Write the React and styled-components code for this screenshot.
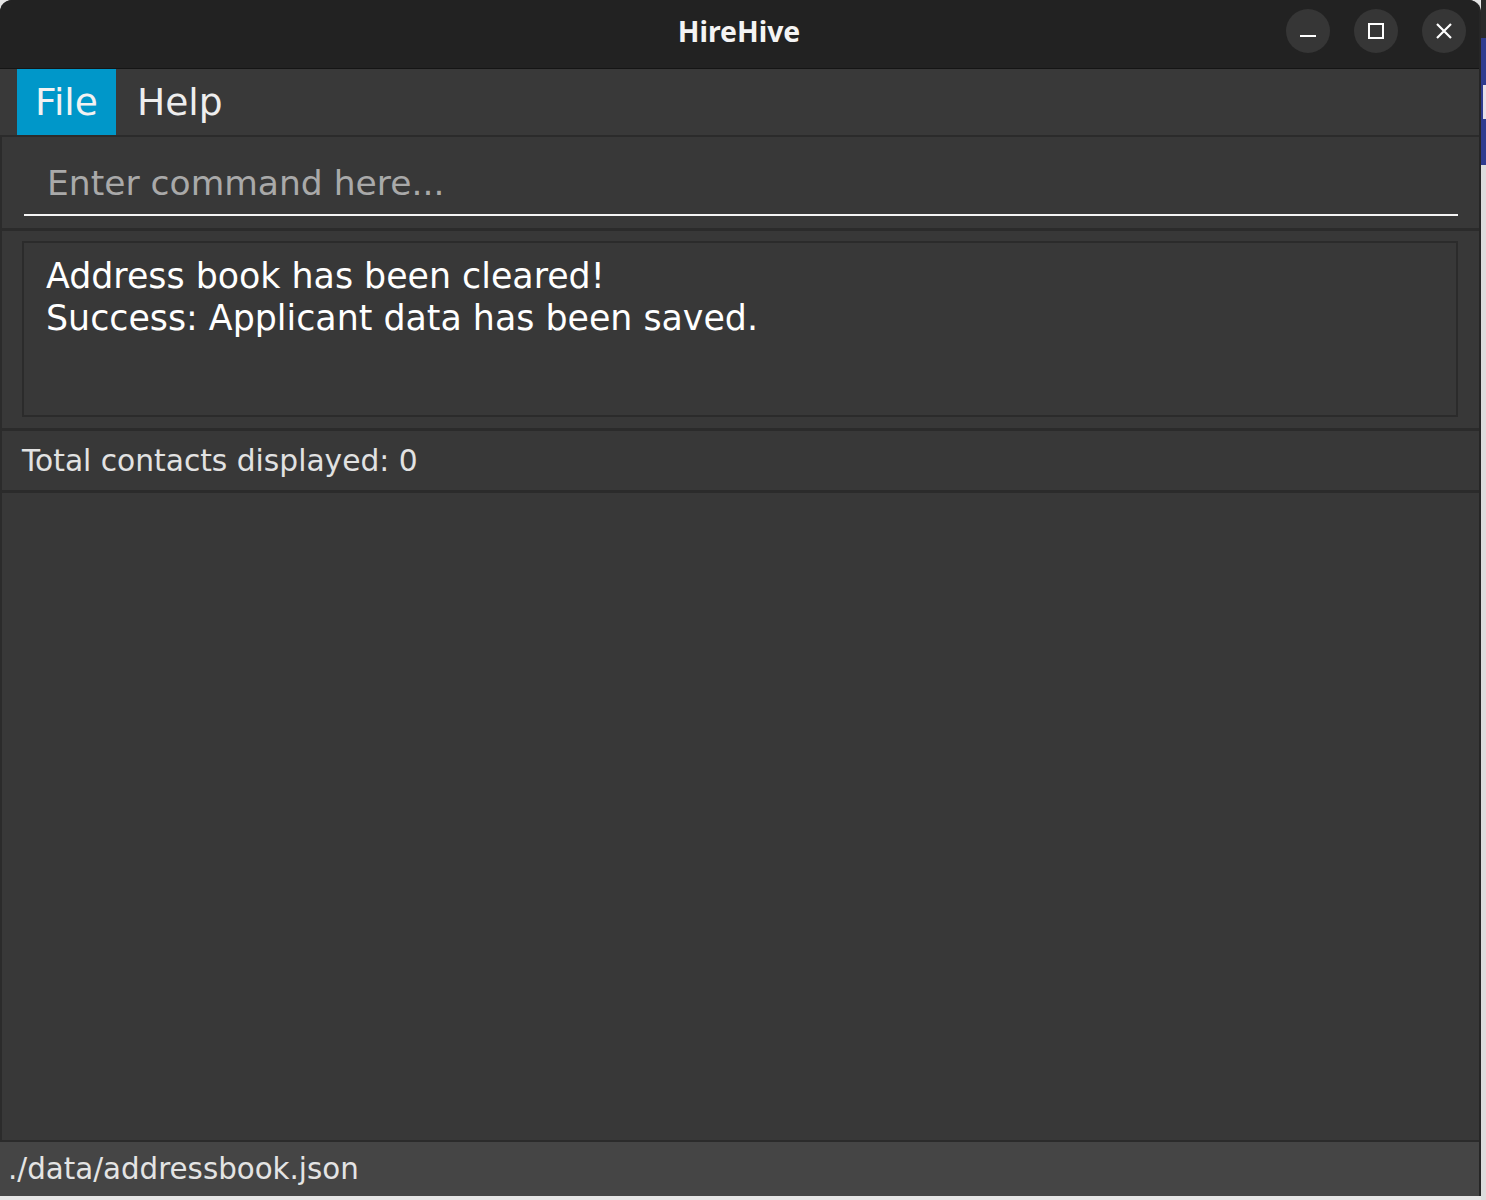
import React from 'react';
import styled, { createGlobalStyle } from 'styled-components';

const GlobalStyle = createGlobalStyle`
  html, body {
    margin: 0;
    padding: 0;
    background: #e4e4e4;
  }

  #root {
    height: 1200px;
    overflow: hidden;
  }
`;

const Screen = styled.div`
  display: flex;
  flex-direction: row;
  height: 1200px;
  background: #e4e4e4;
`;

const DesktopEdge = styled.div`
  flex: 1;
  display: flex;
  flex-direction: column;
`;

const EdgeTop = styled.div`
  height: 38px;
  background: #2a2a2a;
`;

const EdgeBlue = styled.div`
  height: 127px;
  background: #2f3c8f;
  display: flex;
  align-items: center;
  justify-content: flex-end;
`;

const EdgeMark = styled.div`
  width: 3px;
  height: 34px;
  background: #e8dfe6;
`;

const EdgeGrey = styled.div`
  flex: 1;
  background: #dcdcdc;
`;

const WindowColumn = styled.div`
  width: 1481px;
  display: flex;
  flex-direction: column;
`;

const Window = styled.div`
  height: 1196px;
  display: flex;
  flex-direction: column;
  background: #2b2b2b;
  border-radius: 12px 12px 0 0;
  border-right: 2px solid #262626;
  overflow: hidden;
  font-family: 'DejaVu Sans', 'Liberation Sans', sans-serif;
`;

const BelowWindow = styled.div`
  flex: 1;
  background: #e6e6e6;
`;

const TitleBar = styled.div`
  height: 68px;
  flex-shrink: 0;
  background: #222222;
  border-bottom: 1px solid #151515;
  display: flex;
  align-items: center;
  justify-content: center;
  position: relative;
`;

const Title = styled.span`
  font-family: 'Noto Sans', 'DejaVu Sans', sans-serif;
  font-weight: 700;
  font-size: 28.4px;
  color: #f4f4f4;
  margin: 0 0 6px -1px;
`;

const Controls = styled.div`
  position: absolute;
  right: 13px;
  top: 9px;
  display: flex;
  gap: 24px;
`;

const ControlButton = styled.div`
  width: 44px;
  height: 44px;
  border-radius: 50%;
  background: #363636;
  display: flex;
  align-items: center;
  justify-content: center;
`;

const MenuBar = styled.div`
  height: 66px;
  flex-shrink: 0;
  background: #393939;
  display: flex;
  padding-left: 17px;
`;

const MenuItem = styled.div`
  display: flex;
  align-items: center;
  padding: 0 18px 0 ${p => (p.$active ? 18 : 21)}px;
  font-size: 37.6px;
  color: ${p => (p.$active ? '#f2f2f2' : '#eeeeee')};
  background: ${p => (p.$active ? '#0097c9' : 'transparent')};
`;

const Body = styled.div`
  flex: 1;
  display: flex;
  flex-direction: column;
  gap: 3px;
  padding: 2px 0 0 2px;
  background: #2b2b2b;
`;

const Panel = styled.div`
  background: #383838;
  flex-shrink: 0;
  height: ${p => p.$height || 'auto'};
  flex: ${p => (p.$grow ? 1 : '0 0 auto')};
`;

const CommandPanel = styled(Panel)`
  padding: 0 21px 12px 22px;
  display: flex;
  flex-direction: column;
  justify-content: flex-end;
  box-sizing: border-box;
`;

const CommandInput = styled.div`
  border-bottom: 2px solid #f5f5f5;
  padding: 0 0 9px 23px;
  font-size: 34.5px;
  color: #a9a9a9;
  line-height: 44px;
`;

const ResultPanel = styled(Panel)`
  padding: 10px 21px 11px 20px;
  box-sizing: border-box;
  display: flex;
`;

const ResultBox = styled.div`
  flex: 1;
  border: 2px solid #2b2b2b;
  padding: 12px 22px;
  font-size: 34.8px;
  line-height: 42px;
  color: #ffffff;
`;

const StatusPanel = styled(Panel)`
  display: flex;
  align-items: center;
  padding-left: 20px;
  font-size: 29.7px;
  color: #e2e2e2;
`;

const Footer = styled.div`
  height: 54px;
  flex-shrink: 0;
  border-top: 2px solid #2b2b2b;
  background: #454545;
  display: flex;
  align-items: center;
  padding-left: 8px;
  font-size: 29.3px;
  color: #e4e4e4;
`;

const App = () => (
  <>
    <GlobalStyle />
    <Screen>
      <WindowColumn>
        <Window>
          <TitleBar>
            <Title>HireHive</Title>
            <Controls>
              <ControlButton>
                <svg width="18" height="18" viewBox="0 0 18 18">
                  <rect x="1" y="13" width="16" height="2" fill="#fff" />
                </svg>
              </ControlButton>
              <ControlButton>
                <svg width="18" height="18" viewBox="0 0 18 18">
                  <rect x="2" y="2" width="14" height="14" fill="none" stroke="#fff" strokeWidth="2" />
                </svg>
              </ControlButton>
              <ControlButton>
                <svg width="18" height="18" viewBox="0 0 18 18">
                  <path d="M2 2 L16 16 M16 2 L2 16" stroke="#fff" strokeWidth="2.2" />
                </svg>
              </ControlButton>
            </Controls>
          </TitleBar>
          <MenuBar>
            <MenuItem $active>File</MenuItem>
            <MenuItem>Help</MenuItem>
          </MenuBar>
          <Body>
            <CommandPanel $height="91px">
              <CommandInput>Enter command here...</CommandInput>
            </CommandPanel>
            <ResultPanel $height="197px">
              <ResultBox>
                Address book has been cleared!
                <br />
                Success: Applicant data has been saved.
              </ResultBox>
            </ResultPanel>
            <StatusPanel $height="59px">Total contacts displayed: 0</StatusPanel>
            <Panel $grow />
          </Body>
          <Footer>./data/addressbook.json</Footer>
        </Window>
        <BelowWindow />
      </WindowColumn>
      <DesktopEdge>
        <EdgeTop />
        <EdgeBlue>
          <EdgeMark />
        </EdgeBlue>
        <EdgeGrey />
      </DesktopEdge>
    </Screen>
  </>
);

export default App;
